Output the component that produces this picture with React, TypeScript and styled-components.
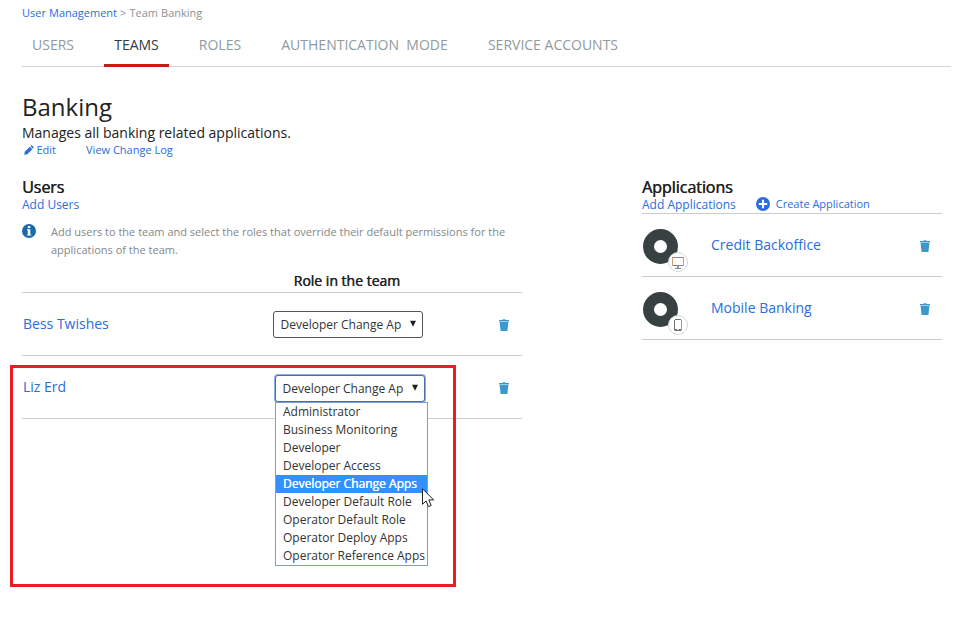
import React from "react";
import styled, { createGlobalStyle, css } from "styled-components";

const GlobalStyle = createGlobalStyle`
  *, *::before, *::after { box-sizing: border-box; }
  body { margin: 0; background: #fff; font-family: "Open Sans", sans-serif; color: #222; }
  ul { margin: 0; padding: 0; list-style: none; }
  h1, h2, p { margin: 0; }
`;

const Page = styled.main`
  position: relative;
  height: 621px;
  padding: 0 11px 0 22px;
  overflow: hidden;
`;

const link = css`
  color: #2a6de0;
  text-decoration: none;
  white-space: nowrap;
`;

const Link = styled.a<{ $size: number }>`
  ${link}
  font-size: ${(p) => p.$size}px;
`;

const Breadcrumb = styled.div`
  height: 24px;
  padding-top: 5px;
  font-size: 11px;
  line-height: 16px;
  color: #8d9295;
  word-spacing: 0.2px;
`;

const Tabs = styled.nav`
  display: flex;
  gap: 20px;
  height: 43px;
  border-bottom: 1px solid #ccd5d8;
`;

const Tab = styled.a<{ $active?: boolean; $width: number }>`
  width: ${(p) => p.$width}px;
  height: 43px;
  font-size: 14px;
  line-height: 42px;
  text-align: center;
  white-space: pre;
  color: ${(p) => (p.$active ? "#323b3e" : "#8f9b9e")};
  border-bottom: 3px solid ${(p) => (p.$active ? "#c91a12" : "transparent")};
`;

const Title = styled.h1`
  margin-top: 23px;
  height: 34px;
  font-size: 24px;
  line-height: 33px;
  font-weight: 400;
`;

const Description = styled.p`
  height: 18px;
  font-size: 14px;
  line-height: 18px;
`;

const TitleActions = styled.div`
  display: flex;
  gap: 30px;
  height: 16px;
  padding-left: 2px;
  line-height: 16px;
`;

const IconLink = styled.span<{ $gap: number }>`
  display: flex;
  align-items: center;
  gap: ${(p) => p.$gap}px;
`;

const Columns = styled.div`
  display: grid;
  grid-template-columns: 500px 300px;
  column-gap: 120px;
  padding-top: 20px;
`;

const SectionTitle = styled.h2`
  height: 18px;
  font-size: 16px;
  line-height: 19px;
  font-weight: 400;
  letter-spacing: -0.05px;
  text-shadow: 0.5px 0 0 #222;
`;

const SectionActions = styled.div<{ $ruled?: boolean }>`
  display: flex;
  align-items: flex-start;
  gap: 20px;
  height: 18px;
  line-height: 16px;
  border-bottom: ${(p) => (p.$ruled ? "1px solid #ccc" : "none")};
`;

const AddLink = styled.a`
  ${link}
  font-size: 12px;
  line-height: 18px;
`;

const Hint = styled.div`
  display: grid;
  grid-template-columns: 29px 1fr;
  padding-top: 10px;
  height: 55px;
  color: #84888a;
  font-size: 11px;
  line-height: 18px;

  p {
    margin-top: -1px;
  }
`;

const ColumnHead = styled.div`
  height: 23px;
  padding-left: 271.5px;
  font-size: 14px;
  line-height: 24px;
  text-shadow: 0.5px 0 0 #222;
`;

const UserList = styled.ul`
  border-top: 1px solid #ccc;
`;

const UserRow = styled.li<{ $shift: number }>`
  display: grid;
  grid-template-columns: ${(p) => 251 + p.$shift}px ${(p) => 225 - p.$shift}px 1fr;
  align-items: center;
  height: 63px;
  border-bottom: 1px solid #ccc;
`;

const RowName = styled.a`
  ${link}
  padding: 0 0 2px 1px;
  font-size: 14px;
`;

const AppName = styled.a`
  ${link}
  padding-bottom: 2px;
  font-size: 14px;
`;

const SelectWrap = styled.div`
  position: relative;
  width: 150px;
`;

const SelectBox = styled.div<{ $open?: boolean }>`
  display: flex;
  align-items: center;
  justify-content: space-between;
  width: 150px;
  height: 27px;
  margin-top: ${(p) => (p.$open ? 2 : 0)}px;
  padding: 0 5px 0 6.5px;
  border: 1px solid ${(p) => (p.$open ? "#4a6da8" : "#555")};
  border-radius: 3px;
  box-shadow: ${(p) => (p.$open ? "0 0 0 1px #8fb1ea" : "none")};
  background: #fff;
  color: #333;
  font-size: 12px;
  white-space: nowrap;
`;

const Menu = styled.ul`
  position: absolute;
  z-index: 2;
  top: 29px;
  left: 0;
  width: 153px;
  border: 1px solid #7f9dcf;
  background: #fff;
`;

const Option = styled.li<{ $selected?: boolean }>`
  height: 18px;
  padding-left: 7px;
  font-size: 12px;
  line-height: 17px;
  white-space: nowrap;
  color: ${(p) => (p.$selected ? "#fff" : "#333")};
  text-shadow: ${(p) => (p.$selected ? "0.3px 0 0 #fff" : "none")};
  background: ${(p) => (p.$selected ? "#3390ff" : "transparent")};
`;

const AppRow = styled.li`
  display: grid;
  grid-template-columns: 69px 208px 1fr;
  align-items: center;
  height: 63px;
  border-bottom: 1px solid #ccc;
`;

const Highlight = styled.div`
  position: absolute;
  z-index: 3;
  left: 10px;
  top: 365px;
  width: 446px;
  height: 222px;
  border: 3px solid #ed1c24;
  pointer-events: none;
`;

const Pointer = styled.svg`
  position: absolute;
  z-index: 4;
  left: 422px;
  top: 488px;
`;

const Trash = styled.svg`
  margin-top: 4px;
`;

const AppBadge = styled.svg`
  margin-top: 12px;
`;

const TrashIcon = () => (
  <Trash width="12" height="14" viewBox="0 0 12 14" fill="#3d99cc">
    <path d="M1 1h3.6V.2h2.8V1H11v1.4H1zM1.6 3h8.8l-1 9H2.6z" />
  </Trash>
);

const PencilIcon = () => (
  <svg width="10" height="10" viewBox="0 0 10 10" fill="#2a6de0">
    <path d="M.2 9.8.8 6.7l5-5 2.5 2.5-5 5zM6.4 1.2 7.1.5q.5-.5 1 0l1.4 1.4q.5.5 0 1l-.7.7z" />
  </svg>
);

const InfoIcon = () => (
  <svg width="14" height="14" viewBox="0 0 14 14">
    <circle cx="7" cy="7" r="7" fill="#1c68ad" />
    <path d="M5.8 2h2.5v2H5.8zM5 5.2h3.3v5.2h.9v1.2H4.9v-1.2h.9V6.4H5z" fill="#fff" />
  </svg>
);

const PlusIcon = () => (
  <svg width="14" height="14" viewBox="0 0 14 14">
    <circle cx="7" cy="7" r="7" fill="#2a6de0" />
    <path d="M7 2.8v8.4M2.8 7h8.4" stroke="#fff" strokeWidth="2.1" />
  </svg>
);

const Caret = () => (
  <svg width="8" height="8" viewBox="0 0 8 8" fill="#222">
    <path d="M1 .8h6L4 6.8z" />
  </svg>
);

const AppIcon = ({ kind }: { kind: "desktop" | "phone" }) => (
  <AppBadge width="48" height="46" viewBox="0 0 48 46">
    <circle cx="18.5" cy="18.5" r="12" fill="none" stroke="#384142" strokeWidth="11" />
    <circle cx="36" cy="34" r="9.5" fill="#fff" stroke="#d8d8d8" />
    {kind === "desktop" ? (
      <g fill="none" stroke="#85858b">
        <path d="M31 29.5h10M31 37.5h10M33 40.5h6" />
        <path d="M36 38v2" stroke="#7f9fbf" strokeWidth="2" />
        <path d="M30.5 29v9M41.5 29v9" stroke="#dc9a74" />
      </g>
    ) : (
      <g fill="none" stroke="#6f6f75">
        <path d="M33 28.5h6M33 39.5h6M33 38.5h2.2M36.8 38.5H39" />
        <path d="M32.5 29v10.5" />
        <path d="M39.5 29v10.5" stroke="#d08c64" />
      </g>
    )}
  </AppBadge>
);

const roles = [
  "Administrator",
  "Business Monitoring",
  "Developer",
  "Developer Access",
  "Developer Change Apps",
  "Developer Default Role",
  "Operator Default Role",
  "Operator Deploy Apps",
  "Operator Reference Apps",
];

const tabs = [
  { label: "USERS", width: 62 },
  { label: "TEAMS", width: 65, active: true },
  { label: "ROLES", width: 62 },
  { label: "AUTHENTICATION  MODE", width: 187 },
  { label: "SERVICE ACCOUNTS", width: 150 },
];

const users = [
  { name: "Bess Twishes", open: false },
  { name: "Liz Erd", open: true },
];

const apps: { name: string; kind: "desktop" | "phone" }[] = [
  { name: "Credit Backoffice", kind: "desktop" },
  { name: "Mobile Banking", kind: "phone" },
];

export default function App() {
  return (
    <>
      <GlobalStyle />
      <Page>
        <Breadcrumb>
          <Link $size={11}>User Management</Link> &gt; Team Banking
        </Breadcrumb>
        <Tabs>
          {tabs.map((t) => (
            <Tab key={t.label} $width={t.width} $active={t.active}>
              {t.label}
            </Tab>
          ))}
        </Tabs>
        <Title>Banking</Title>
        <Description>Manages all banking related applications.</Description>
        <TitleActions>
          <IconLink $gap={2.5}>
            <PencilIcon />
            <Link $size={11}>Edit</Link>
          </IconLink>
          <Link $size={11}>View Change Log</Link>
        </TitleActions>
        <Columns>
          <section>
            <SectionTitle>Users</SectionTitle>
            <SectionActions>
              <AddLink>Add Users</AddLink>
            </SectionActions>
            <Hint>
              <InfoIcon />
              <p>
                Add users to the team and select the roles that override their default permissions for the
                applications of the team.
              </p>
            </Hint>
            <ColumnHead>Role in the team</ColumnHead>
            <UserList>
              {users.map((u) => (
                <UserRow key={u.name} $shift={u.open ? 2 : 0}>
                  <RowName>{u.name}</RowName>
                  <SelectWrap>
                    <SelectBox $open={u.open}>
                      Developer Change Ap
                      <Caret />
                    </SelectBox>
                    {u.open && (
                      <Menu>
                        {roles.map((r) => (
                          <Option key={r} $selected={r === "Developer Change Apps"}>
                            {r}
                          </Option>
                        ))}
                      </Menu>
                    )}
                  </SelectWrap>
                  <TrashIcon />
                </UserRow>
              ))}
            </UserList>
          </section>
          <section>
            <SectionTitle>Applications</SectionTitle>
            <SectionActions $ruled>
              <AddLink>Add Applications</AddLink>
              <IconLink $gap={6}>
                <PlusIcon />
                <Link $size={11}>Create Application</Link>
              </IconLink>
            </SectionActions>
            <ul>
              {apps.map((a) => (
                <AppRow key={a.name}>
                  <AppIcon kind={a.kind} />
                  <AppName>{a.name}</AppName>
                  <TrashIcon />
                </AppRow>
              ))}
            </ul>
          </section>
        </Columns>
        <Highlight />
        <Pointer width="14" height="20" viewBox="0 0 14 20">
          <path
            d="M.5.8v15.5l3.6-3.4 2.4 5.7 2.7-1.1-2.4-5.6h4.9z"
            fill="#fff"
            stroke="#222"
            strokeWidth="1"
          />
        </Pointer>
      </Page>
    </>
  );
}
